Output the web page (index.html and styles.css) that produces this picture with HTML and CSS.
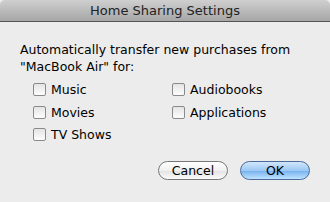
FILE: index.html
```html
<!DOCTYPE html>
<html lang="en">
<head>
  <meta charset="UTF-8">
  <title>Home Sharing Settings</title>
  <link rel="stylesheet" href="styles.css">
</head>
<body>
  <div class="dialog">
    <div class="title-bar">Home Sharing Settings</div>
    <div class="dialog-body">
      <p class="prompt">Automatically transfer new purchases from<br>"MacBook Air" for:</p>
      <div class="options">
        <label class="option"><span class="box"></span>Music</label>
        <label class="option"><span class="box"></span>Audiobooks</label>
        <label class="option"><span class="box"></span>Movies</label>
        <label class="option"><span class="box"></span>Applications</label>
        <label class="option"><span class="box"></span>TV Shows</label>
      </div>
      <div class="buttons">
        <button class="btn">Cancel</button>
        <button class="btn btn-default">OK</button>
      </div>
    </div>
  </div>
</body>
</html>
```

FILE: styles.css
```css
html, body {
  margin: 0;
  padding: 0;
}

body {
  width: 330px;
  height: 202px;
  overflow: hidden;
  background: #ececec;
  font-family: "DejaVu Sans", sans-serif;
  color: #000;
}

.dialog {
  width: 330px;
  height: 202px;
}

.title-bar {
  height: 21px;
  line-height: 22px;
  text-align: center;
  font-size: 13px;
  color: #222;
  background: linear-gradient(#cfcfcf, #a6a6a6);
  border-bottom: 1px solid #555;
  border-top-right-radius: 5px;
  border-top-left-radius: 5px;
}

.dialog-body {
  padding: 19px 20px 0 20px;
}

.prompt {
  margin: 0;
  font-size: 12.5px;
  line-height: 17px;
}

.options {
  display: grid;
  grid-template-columns: 139px 130px;
  row-gap: 5.5px;
  margin: 6px 0 0 13px;
}

.option {
  display: flex;
  align-items: center;
  font-size: 12.5px;
  height: 17px;
}

.box {
  width: 11px;
  height: 11px;
  margin-right: 5px;
  border: 1px solid #8a8a8a;
  border-radius: 2px;
  background: linear-gradient(#e4e4e4, #fdfdfd);
}

.buttons {
  display: flex;
  justify-content: flex-end;
  gap: 12px;
  margin-top: 18px;
}

.btn {
  width: 70px;
  height: 19px;
  padding: 0;
  font-family: "DejaVu Sans", sans-serif;
  font-size: 12.5px;
  border: 1px solid #777;
  border-radius: 10px;
  background: linear-gradient(#ffffff, #f0f0f0 50%, #e2e2e2 51%, #fbfbfb);
  color: #000;
}

.btn-default {
  border-color: #4a6a9a;
  background: linear-gradient(#d2e6fb, #9cc8f3 50%, #74b0ee 51%, #bfe3ff);
}
```
